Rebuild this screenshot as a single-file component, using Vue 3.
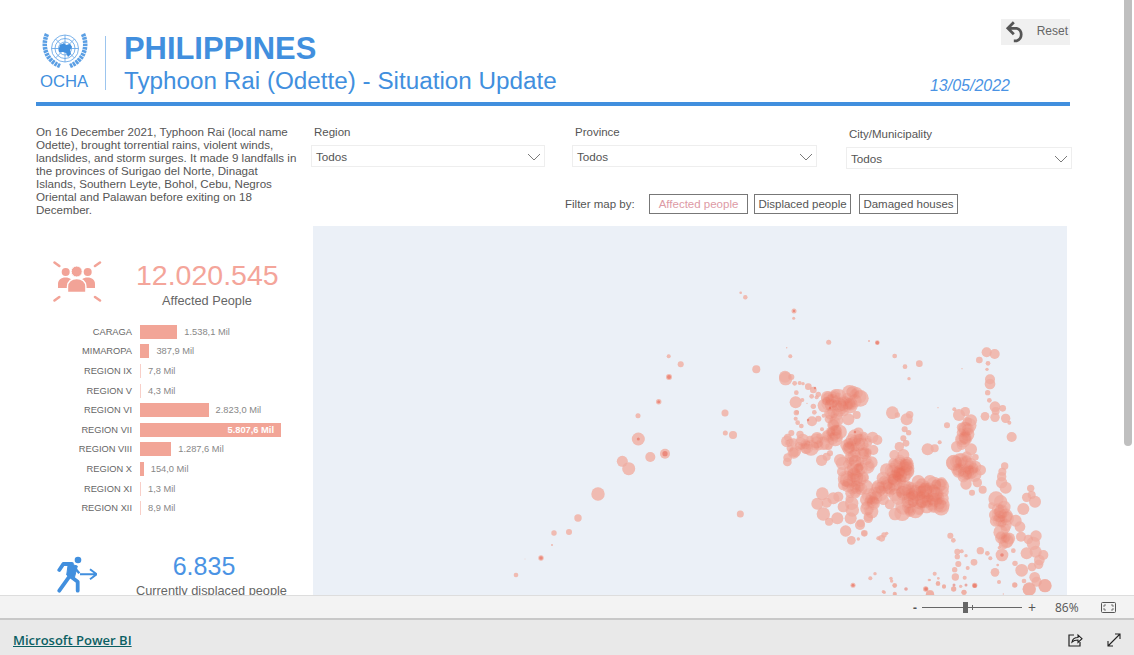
<template>
  <div class="page">
    <div class="viewport">
      <div class="report">
        <header class="head">
          <div class="logo">
            <svg class="emblem" viewBox="0 0 46 38" width="46" height="38">
              <g fill="none" stroke="#5b9fe4" stroke-width="0.8">
                <circle cx="23" cy="17.500" r="13.500" />
                <circle cx="23" cy="17.500" r="10" />
                <circle cx="23" cy="17.500" r="6.500" />
                <path d="M9.500 17.500h27M23 4v27M13.500 8l19 19M32.500 8l-19 19" />
              </g>
              <path d="M18 14l4-2 2 2 4-1 2 3-2 3 1 4-3 3-2-4-3-1-4 0 0-4z" fill="#418fde" />
              <g fill="none" stroke="#5b9fe4" stroke-width="4.500" stroke-dasharray="2.600 0.700">
                <path d="M5 3C0 14 3 29 18 35" />
                <path d="M41 3C46 14 43 29 28 35" />
              </g>
            </svg>
            <span class="ocha">OCHA</span>
          </div>
          <div class="divider"></div>
          <div class="titles">
            <h1>PHILIPPINES</h1>
            <h2>Typhoon Rai (Odette) - Situation Update</h2>
          </div>
          <div class="head-right">
            <button class="reset">
              <svg viewBox="0 0 22 22" width="24" height="24">
                <path d="M9 3L3.500 8.500 9 14M4 8.500h7.500a6 6 0 0 1 0 11.500H9" fill="none" stroke="#555" stroke-width="2.500" />
              </svg>
              <span>Reset</span>
            </button>
            <div class="date">13/05/2022</div>
          </div>
        </header>
        <div class="rule"></div>

        <div class="body">
          <aside class="left">
            <p class="intro">
              On 16 December 2021, Typhoon Rai (local name Odette), brought torrential rains, violent winds, landslides, and storm surges. It made 9 landfalls in the provinces of Surigao del Norte, Dinagat Islands, Southern Leyte, Bohol, Cebu, Negros Oriental and Palawan before exiting on 18 December.
            </p>

            <div class="kpi kpi-red">
              <svg class="kpi-icon" viewBox="0 0 49 41" width="49" height="41">
                <g fill="#f2a397">
                  <circle cx="12.700" cy="11" r="4" />
                  <circle cx="34.700" cy="11" r="4" />
                  <path d="M5 27v-4c0-4 3-6.500 7.500-6.500s7.500 2.500 7.500 6.500v4z" />
                  <path d="M27 27v-4c0-4 3-6.500 7.500-6.500s7.500 2.500 7.500 6.500v4z" />
                  <circle cx="23.700" cy="10.500" r="5.500" stroke="#fff" stroke-width="1" />
                  <path d="M14.500 31.500v-6c0-5 4-8 9.200-8s9.200 3 9.200 8v6z" stroke="#fff" stroke-width="1.400" />
                </g>
                <g stroke="#f2a397" stroke-width="2.500" stroke-linecap="round">
                  <path d="M1.500 1.500L6.300 5M47 1.500L42 5M1.500 39.500L6.300 36M47 39.500L42 36" />
                </g>
              </svg>
              <div class="kpi-text">
                <div class="kpi-num">12.020.545</div>
                <div class="kpi-label">Affected People</div>
              </div>
            </div>

            <div class="chart">
              <div v-for="row in regions" :key="row.name" class="bar-row">
                <span class="bar-name">{{ row.name }}</span>
                <div class="bar" :class="{ thin: row.value < 20 }" :style="{ width: barWidth(row.value) + 'px' }">
                  <span v-if="row.inside" class="bar-inside">{{ row.label }}</span>
                </div>
                <span v-if="!row.inside" class="bar-value">{{ row.label }}</span>
              </div>
            </div>

            <div class="kpi kpi-blue">
              <svg class="kpi-icon" viewBox="0 0 40 38" width="40" height="38">
                <circle cx="21" cy="4" r="3.300" fill="#418fde" />
                <path d="M11.300 7.500L20.300 10 17 23.300 9.700 19z" fill="#418fde" stroke="#418fde" stroke-linejoin="round" />
                <path d="M2.300 14L6.300 8H15M12.300 20.700L2.300 34.700M14.700 21.300L20.700 25.700V34.700" fill="none" stroke="#418fde" stroke-width="3.800" stroke-linecap="round" stroke-linejoin="round" />
                <path d="M18 12.300L22.300 17.300" fill="none" stroke="#418fde" stroke-width="2.500" />
                <path d="M23 18.300h16.500M33 13.300l6.700 5-6.700 5" fill="none" stroke="#418fde" stroke-width="2" />
              </svg>
              <div class="kpi-text">
                <div class="kpi-num">6.835</div>
                <div class="kpi-label">Currently displaced people</div>
              </div>
            </div>
          </aside>

          <section class="right">
            <div class="slicers">
              <div v-for="s in slicers" :key="s.label" class="slicer" :class="s.cls">
                <label>{{ s.label }}</label>
                <div class="select">
                  <span>Todos</span>
                  <svg viewBox="0 0 14 8" width="14" height="8">
                    <path d="M1 1l6 6 6-6" fill="none" stroke="#7a7a7a" stroke-width="1" />
                  </svg>
                </div>
              </div>
            </div>

            <div class="filter-row">
              <span class="filter-label">Filter map by:</span>
              <button class="fbtn active">Affected people</button>
              <button class="fbtn mid">Displaced people</button>
              <button class="fbtn last">Damaged houses</button>
            </div>

            <div class="map">
              <svg viewBox="313 226 754 374" width="754" height="374">
                <g fill="#f1c7c0">
                  <circle v-for="(b, i) in bubbles" :key="i" :cx="b[0]" :cy="b[1]" :r="b[2]" />
                </g>
                <g fill="#e8705c" fill-opacity="0.14">
                  <circle v-for="(b, i) in bubbles" :key="'o' + i" :cx="b[0]" :cy="b[1]" :r="b[2]" />
                </g>
                <circle v-for="(b, i) in hotspots" :key="'h' + i" :cx="b[0]" :cy="b[1]" :r="b[2]" fill="#e4503c" fill-opacity="0.45" />
              </svg>
            </div>
          </section>
        </div>
      </div>

      <div class="scrollbar"><div class="thumb"></div></div>
    </div>

    <div class="zoombar">
      <span class="zminus">-</span>
      <div class="slider"><i class="tick"></i><i class="knob"></i></div>
      <span class="zplus">+</span>
      <span class="zpct">86%</span>
      <svg viewBox="0 0 15 11" width="15" height="11" class="fit">
        <rect x="0.500" y="0.500" width="14" height="10" rx="1" fill="none" stroke="#555" />
        <path d="M3 5V3h2M12 5V3h-2M3 6v2h2M12 6v2h-2" fill="none" stroke="#555" stroke-width="0.800" />
      </svg>
    </div>

    <footer class="foot">
      <a class="pbi" href="#">Microsoft Power BI</a>
      <div class="foot-icons">
        <svg viewBox="0 0 16 16" width="16" height="16">
          <path d="M7 3H2v11h11v-4" fill="none" stroke="#222" stroke-width="1.200" />
          <path d="M5 10c.5-3 3-4.500 6-4.500V3l4 3.700-4 3.700V8c-2.500 0-4.500.5-6 2z" fill="none" stroke="#222" stroke-width="1.100" />
        </svg>
        <svg viewBox="0 0 14 14" width="14" height="14">
          <path d="M1 13L13 1M8 1h5v5M1 8v5h5" fill="none" stroke="#222" stroke-width="1.100" />
        </svg>
      </div>
    </footer>
  </div>
</template>

<script setup>
const regions = [
  { name: 'CARAGA', value: 1538.1, label: '1.538,1 Mil' },
  { name: 'MIMAROPA', value: 387.9, label: '387,9 Mil' },
  { name: 'REGION IX', value: 7.8, label: '7,8 Mil' },
  { name: 'REGION V', value: 4.3, label: '4,3 Mil' },
  { name: 'REGION VI', value: 2823.0, label: '2.823,0 Mil' },
  { name: 'REGION VII', value: 5807.6, label: '5.807,6 Mil', inside: true },
  { name: 'REGION VIII', value: 1287.6, label: '1.287,6 Mil' },
  { name: 'REGION X', value: 154.0, label: '154,0 Mil' },
  { name: 'REGION XI', value: 1.3, label: '1,3 Mil' },
  { name: 'REGION XII', value: 8.9, label: '8,9 Mil' },
]

const barWidth = (v) => Math.max(1, (v / 5807.6) * 141)

const slicers = [
  { label: 'Region', cls: 's-region' },
  { label: 'Province', cls: 's-province' },
  { label: 'City/Municipality', cls: 's-city' },
]

// map bubbles, x y r in page px
const looseDots = [
  [740.7, 292.7, 1.3], [745.3, 297.3, 2.2], [794, 311, 2.5], [793.7, 318.3, 1.5], [828.7, 342.3, 2.5],
  [869, 341, 1], [786.7, 347.7, 0.7], [790.3, 356.3, 2], [668.7, 356.3, 2], [680.7, 364.3, 3],
  [669, 377, 3], [756.3, 369.3, 4], [658.7, 401.7, 2.7], [638, 415.7, 2.5], [638.3, 439, 6.5],
  [622.3, 461.3, 5.5], [628.7, 468.7, 6.5], [650.3, 457, 5], [665, 453.7, 5], [725, 413, 3.5],
  [725.3, 433, 2.5], [733, 435, 4], [740.3, 514, 3.5], [853, 585.3, 2.5],
  [598, 494, 6.7], [578, 518, 3.7], [569, 532, 3], [554, 533, 2.7], [552, 545, 1], [541, 558, 2.7],
  [525, 559, 0.4], [516, 575, 2.3],
]

// west group, coordinates from a 3x crop at (620, 280)
const west = [
  [497,296,20],[495,290,18],[514,291,9],[524,310,7],[539,309,6],[549,311,5],[565,320,10],[580,330,10],[595,343,8],
  [575,349,7],[590,352,6],[529,338,7],[527,367,18],[547,360,6],[580,379,8],[583,397,7],[561,370,2],[529,398,8],
  [531,397,6],[527,416,6],[533,428,7],[544,438,7],[576,424,15],[595,416,9],[611,407,6],[540,463,11],[514,459,9],
  [503,472,11],[502,488,8],[520,487,12],[510,505,10],[521,518,18],[503,533,13],[502,546,13],[545,500,10],[560,490,10],
  [570,478,11],[565,500,9],[597,468,8],[606,448,6],[590,487,18],[610,490,20],[626,500,10],[630,520,9],[605,541,17],
  [620,530,12],[620,362,12],[640,345,10],[655,348,10],[630,375,16],[650,375,16],[665,370,14],[690,370,16],[705,362,20],
  [720,350,19],[640,395,18],[672,395,14],[685,418,18],[710,405,12],[650,420,20],[640,435,18],[632,455,14],[637,476,18],
  [622,468,14],[705,470,22],[695,480,18],[730,470,10],[745,478,10],[685,505,18],[730,520,18],[745,515,10],[660,540,18],
  [668,550,20],[690,545,14],[720,545,14],[665,575,14],[700,570,20],[680,600,20],[710,590,20],[730,590,16],[670,615,16],
  [705,630,20],[690,640,14],[607,641,19],[592,671,18],[620,668,15],[640,655,18],[655,650,15],[670,680,17],[695,670,20],
  [697,690,20],[610,702,20],[627,725,12],[652,715,18],[692,715,18],[720,735,15],[745,715,14],[677,753,17],[694,781,13],
  [733,760,10],[715,777,5],[745,690,14],[750,660,15],
]

// east group, coordinates from a 3x crop at (860, 330)
const east = [
  [52,38,7],[104,78,7],[135,110,7],[178,101,10],[147,146,5],[1,205,25],[97,248,19],[112,255,8],[140,268,18],[149,254,11],
  [134,298,9],[146,308,8],[130,325,9],[138,340,10],[118,350,14],[103,375,15],[130,375,18],[140,400,20],[120,400,20],
  [140,425,22],[100,400,15],[80,420,20],[70,445,20],[55,470,20],[45,490,20],[60,490,24],[40,520,20],[35,545,20],[25,560,14],
  [2,580,12],[13,610,8],[38,322,17],[52,330,15],[40,360,15],[10,320,15],[15,370,18],[20,390,15],[5,415,18],[8,445,18],[0,470,15],
  [175,455,20],[210,455,20],[245,457,15],[195,480,22],[170,490,24],[130,490,22],[115,505,20],[150,510,25],[190,510,25],
  [225,510,22],[240,520,18],[130,530,24],[105,552,19],[150,545,16],[175,535,20],[200,530,20],[230,490,20],
  [203,358,18],[224,355,12],[239,337,6],[261,286,9],[283,238,6],[297,255,18],[316,245,14],[322,275,14],[325,298,18],
  [316,325,18],[290,350,17],[305,345,15],[333,358,18],[346,382,10],[288,395,18],[305,390,20],[320,380,16],[295,425,18],
  [310,440,17],[340,415,16],[362,420,16],[318,462,17],[352,458,14],[336,488,9],[368,479,12],
  [380,67,15],[404,72,15],[358,90,10],[384,100,7],[381,118,5],[390,148,15],[390,162,16],[383,188,8],[388,211,7],[405,230,16],
  [428,235,10],[407,243,12],[375,259,13],[405,262,14],[437,265,14],[448,278,6],[455,321,15],[306,116,2],[234,233,2],
  [434,408,11],[427,425,12],[425,440,14],[425,458,17],[437,473,18],[422,515,20],[395,527,10],[405,555,18],[425,545,22],
  [440,560,16],[437,585,18],[422,618,14],[440,632,20],[467,572,18],[480,590,16],[483,620,15],[505,628,14],[512,475,11],
  [500,502,14],[515,495,12],[525,515,18],[490,537,18],[528,618,17],[520,640,20],[500,670,18],[527,665,18],[550,675,15],
  [538,690,16],[536,703,14],[426,675,19],[460,662,7],[465,700,8],[485,721,19],[516,711,13],[524,742,16],[555,767,19],
  [507,778,19],[492,753,7],[465,765,7],[405,727,13],[413,705,4],[418,653,5],[361,662,11],[382,670,7],[391,685,6],[342,697,10],
  [323,714,6],[295,702,9],[284,719,8],[286,741,11],[314,743,6],[292,665,9],[305,664,6],[292,680,8],[318,677,5],[344,767,7],
  [302,769,5],[281,777,7],[312,787,7],[252,770,6],[234,760,6],[224,731,6],[235,745,4],[198,777,7],[210,795,13],[210,750,3],
  [104,767,6],[93,745,5],[45,731,5],[31,745,6],[73,787,5],[105,792,5],[271,617,9],[280,631,7],[72,615,8],[65,625,10],
  [55,625,6],[80,610,5],
]

// bottom edge, 3x crop at (880, 580)
const south = [
  [495,17,20],[448,27,20],[470,5,15],[404,15,8],[284,16,8],[357,6,6],[252,37,8],[221,27,8],[192,19,6],[174,11,7],
  [137,27,8],[150,42,12],[44,16,7],[35,3,5],[44,41,6],[10,35,5],[147,0,4],[370,42,2],
]

const fromCrop = (list, ox, oy) => list.map(([x, y, r]) => [ox + x / 3, oy + y / 3, r / 3])

// dense islands: x1 y1 x2 y2 count spread
const islands = [
  [900, 502, 936, 494, 70, 13],
  [870, 507, 907, 463, 55, 6],
  [853, 437, 853, 493, 40, 8],
  [866, 440, 863, 490, 14, 7],
  [827, 403, 860, 397, 26, 7],
  [833, 403, 833, 437, 20, 7],
  [790, 447, 827, 440, 16, 6],
  [957, 463, 977, 473, 20, 6],
  [962, 443, 968, 417, 12, 4],
  [997, 503, 1007, 540, 20, 7],
]

let seed = 7
const rnd = () => {
  seed = (seed * 16807) % 2147483647
  return seed / 2147483647
}

const fill = islands.flatMap(([x1, y1, x2, y2, n, s]) =>
  Array.from({ length: n }, () => {
    const t = rnd()
    return [x1 + (x2 - x1) * t + (rnd() - 0.5) * 2 * s, y1 + (y2 - y1) * t + (rnd() - 0.5) * 2 * s, 4 + rnd() * 4]
  })
)

const bubbles = [
  ...looseDots,
  ...fromCrop(west, 620, 280),
  ...fromCrop(east, 860, 330),
  ...fromCrop(south, 880, 580),
  ...fill,
]

const hotspots = [
  [669, 377, 2], [665, 453.7, 2.6], [638.3, 439, 1.5], [541, 558, 1.8], [794, 311, 1.2], [658.7, 401.7, 1.5],
  [877.3, 342.7, 1.8], [1002, 555, 1.8], [974.7, 585.7, 2], [954, 585, 1.5], [926, 589, 1.8], [966, 585, 1.5],
  [906, 589, 1.8], [853, 585.3, 1.5], [815, 388, 1.2], [830, 408, 1.2], [808, 420, 1.2], [855, 432, 1.2],
]
</script>

<style>
html, body {
  margin: 0;
  overflow: hidden;
}
</style>

<style scoped>
.page {
  width: 1134px;
  height: 655px;
  display: flex;
  flex-direction: column;
  overflow: hidden;
  background: #fff;
  font-family: "Liberation Sans", Arial, sans-serif;
  color: #555;
}

.viewport {
  height: 595px;
  display: flex;
  overflow: hidden;
}

.report {
  width: 1122px;
  box-sizing: border-box;
  padding: 19px 52px 0 36px;
  flex-shrink: 0;
}

.scrollbar {
  width: 12px;
  background: #fff;
}

.thumb {
  width: 8px;
  height: 446px;
  margin-left: 2px;
  background: #bfbfbf;
  border-radius: 0 0 4px 4px;
}

/* header */
.head {
  display: flex;
  height: 83px;
  color: #418fde;
}

.logo {
  width: 52px;
  margin-top: 12px;
  padding-left: 4px;
  display: flex;
  flex-direction: column;
  align-items: flex-start;
}

.emblem {
  margin-left: 2px;
}

.ocha {
  font-size: 16.700px;
  line-height: 16px;
  margin-top: 5px;
}

.divider {
  width: 1px;
  height: 54px;
  margin: 17px 0 0 13px;
  background: #9cc5ee;
}

.titles {
  margin-left: 18px;
  flex: 1;
  padding-top: 13px;
}

h1 {
  margin: 0;
  font-size: 30.900px;
  line-height: 34px;
  font-weight: 700;
}

h2 {
  margin: 0;
  font-size: 24.250px;
  line-height: 29px;
  font-weight: 400;
}

.head-right {
  display: flex;
  flex-direction: column;
  align-items: flex-end;
}

.reset {
  width: 69px;
  height: 26px;
  border: 0;
  padding: 0 2px 2px 3px;
  background: #f0f0f0;
  display: flex;
  align-items: center;
  justify-content: space-between;
  font: 12px "Liberation Sans", Arial, sans-serif;
  color: #666;
}

.date {
  margin-top: 32px;
  margin-right: 60px;
  font-size: 16px;
  font-style: italic;
  line-height: 18px;
  color: #4a93e4;
}

.rule {
  height: 4px;
  background: #418fde;
}

/* body */
.body {
  display: flex;
  gap: 13px;
}

.left {
  width: 262px;
  flex-shrink: 0;
}

.intro {
  margin: 19px 0 0;
  font-size: 11.600px;
  line-height: 13px;
  color: #555;
}

.kpi {
  display: flex;
}

.kpi-red {
  margin-top: 45px;
  padding-left: 17px;
}

.kpi-red .kpi-text {
  width: 142px;
  margin-left: 34px;
  margin-top: -1px;
  text-align: center;
}

.kpi-num {
  font-size: 28.500px;
  line-height: 30px;
}

.kpi-red .kpi-num {
  color: #f4a59a;
}

.kpi-label {
  font-size: 12.750px;
  line-height: 15px;
  margin-top: 3px;
  white-space: nowrap;
  color: #666;
}

.kpi-blue {
  margin-top: 29px;
  padding-left: 21px;
}

.kpi-blue .kpi-icon {
  margin-top: 9px;
}

.kpi-blue .kpi-text {
  width: 136px;
  margin-left: 39px;
  text-align: center;
  padding-top: 4px;
}

.kpi-blue .kpi-num {
  font-size: 25px;
  color: #4a93e4;
}

.kpi-blue .kpi-label {
  margin-top: 2px;
}

.chart {
  margin-top: 14px;
}

.bar-row {
  height: 19.6px;
  display: flex;
  align-items: center;
  font-size: 9.300px;
}

.bar-name {
  width: 96px;
  text-align: right;
  color: #666;
  margin-right: 8px;
}

.bar {
  height: 14px;
  background: #f2a597;
  display: flex;
  align-items: center;
  justify-content: flex-end;
  flex-shrink: 0;
}

.bar.thin {
  background: #f8cfc8;
}

.bar-inside {
  color: #fff;
  font-weight: 700;
  padding-right: 7px;
}

.bar-value {
  margin-left: 7px;
  color: #888;
}

/* slicers */
.slicers {
  display: flex;
  align-items: flex-start;
}

.slicer label {
  display: block;
  font-size: 11.500px;
  line-height: 14px;
  color: #555;
  padding-left: 3px;
  margin-bottom: 6px;
}

.select {
  height: 22px;
  box-sizing: border-box;
  border: 1px solid #eee;
  padding: 0 3px 0 4px;
  display: flex;
  align-items: center;
  justify-content: space-between;
  font-size: 11.700px;
  color: #555;
}

.select svg {
  margin-top: 2px;
}

.s-region {
  width: 234px;
  margin-top: 19px;
}

.s-province {
  width: 245px;
  margin: 19px 0 0 27px;
}

.s-city {
  width: 226px;
  margin: 21px 0 0 29px;
}

.filter-row {
  margin-top: 25px;
  height: 20px;
  display: flex;
  align-items: center;
  padding-left: 254px;
}

.filter-label {
  font-size: 11.500px;
  color: #555;
  width: 84px;
}

.fbtn {
  height: 20px;
  padding: 0;
  border: 1px solid #777;
  background: #fff;
  font: 11.500px "Liberation Sans", Arial, sans-serif;
  color: #555;
}

.fbtn.active {
  width: 99px;
  color: #dd9aa5;
}

.fbtn.mid {
  width: 97px;
  margin-left: 6px;
}

.fbtn.last {
  width: 99px;
  margin-left: 8px;
}

.map {
  margin: 12px 0 0 2px;
  width: 754px;
  height: 374px;
  background: #ebf0f7;
}

.map svg {
  display: block;
}

/* bars under the report */
.zoombar {
  height: 23px;
  box-sizing: border-box;
  border-top: 1px solid #ddd;
  background: #f3f3f3;
  display: flex;
  align-items: center;
  padding-left: 913px;
  color: #555;
  font-size: 12px;
  font-family: "Open Sans", sans-serif;
}

.zminus {
  width: 9px;
  font-weight: 700;
}

.slider {
  width: 100px;
  height: 1px;
  background: #666;
  position: relative;
}

.knob {
  position: absolute;
  left: 41px;
  top: -5px;
  width: 5px;
  height: 11px;
  background: #666;
}

.tick {
  position: absolute;
  left: 50px;
  top: -2px;
  width: 1px;
  height: 5px;
  background: #666;
}

.zplus {
  margin-left: 6px;
  width: 10px;
  font-size: 14px;
}

.zpct {
  margin-left: 17px;
  width: 24px;
}

.fit {
  margin-left: 22px;
}

.foot {
  flex: 1;
  border-top: 2px solid #c8c8c8;
  background: #e9e9e9;
  display: flex;
  align-items: center;
  justify-content: space-between;
  padding: 4px 13px 0;
}

.pbi {
  font-family: "Open Sans", sans-serif;
  font-size: 13px;
  font-weight: 600;
  color: #0b5f63;
}

.foot-icons {
  display: flex;
  align-items: center;
  gap: 24px;
}
</style>
